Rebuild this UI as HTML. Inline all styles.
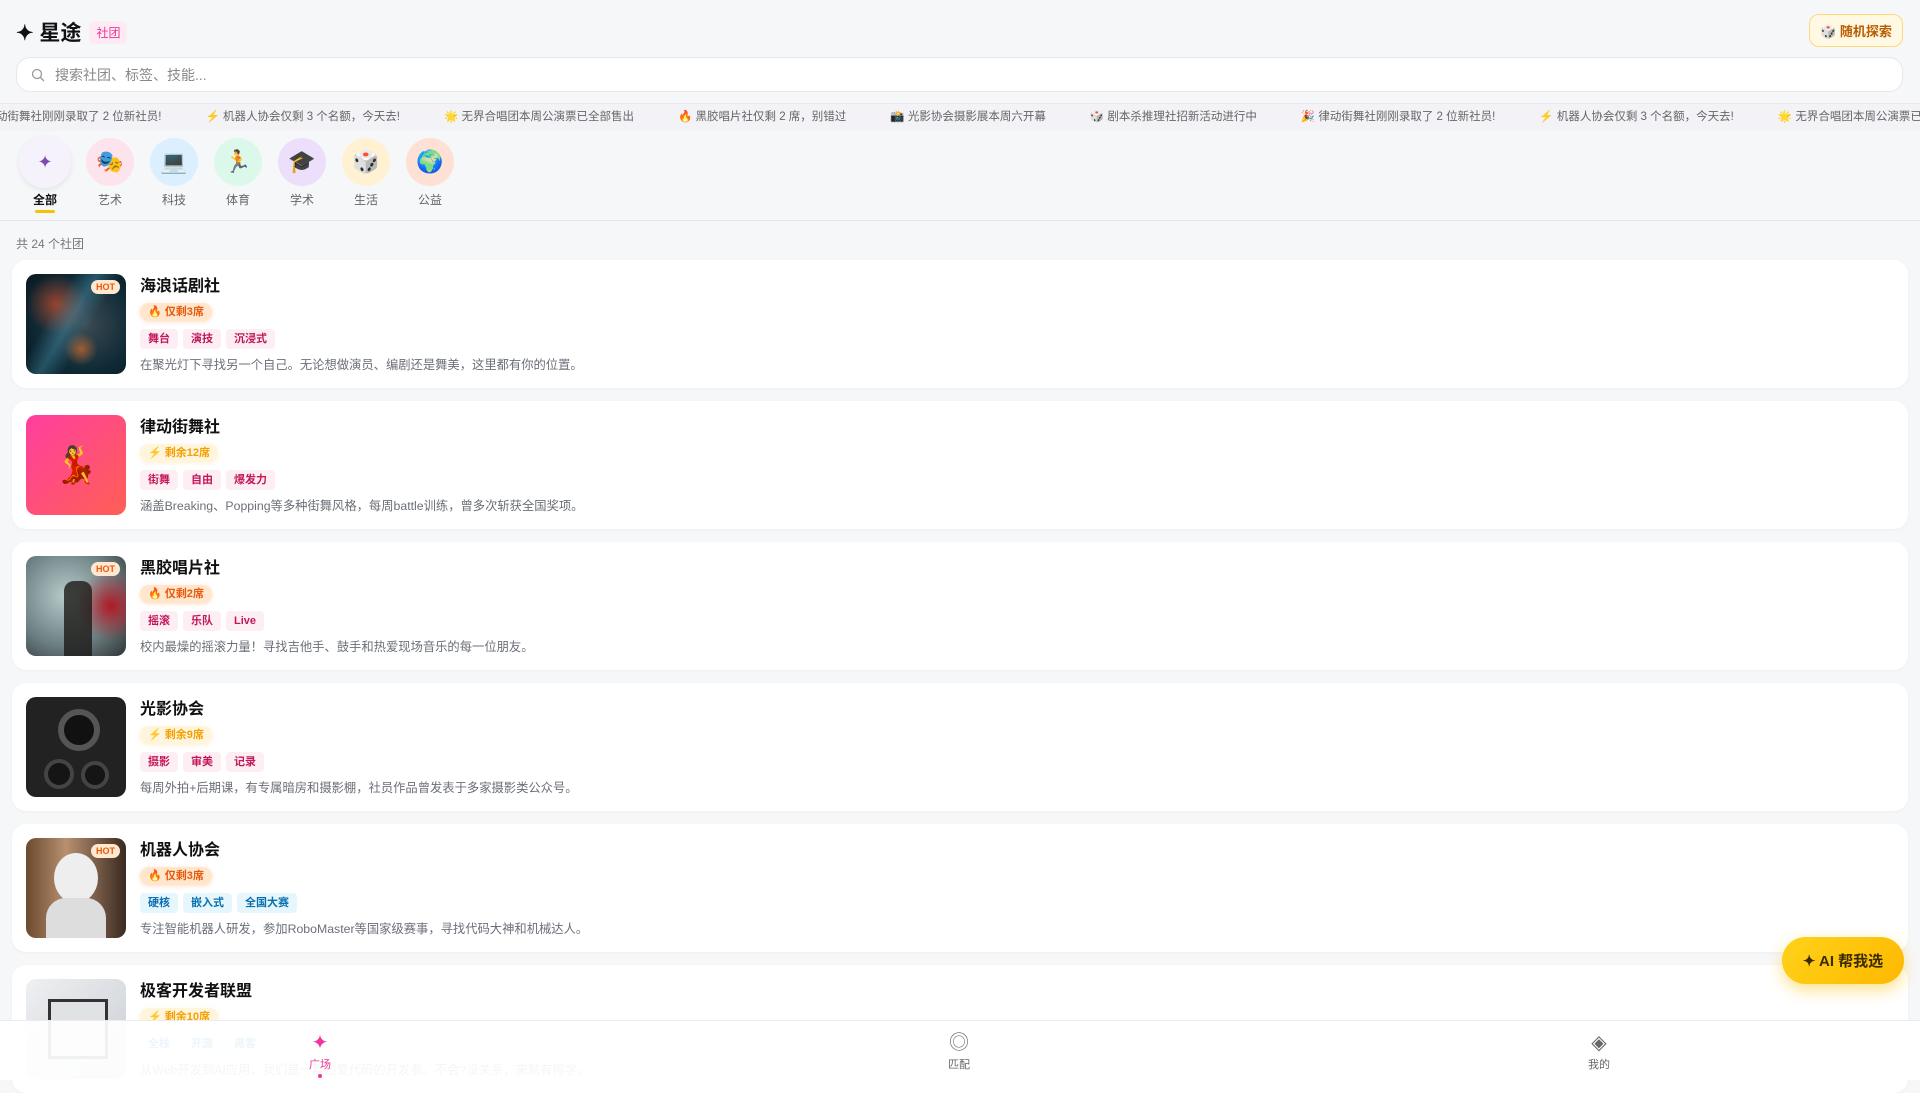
<!DOCTYPE html>
<html><head><meta charset="utf-8"><style>
*{margin:0;padding:0;box-sizing:border-box}
body{width:1920px;height:1080px;overflow:hidden;background:#f6f7f9;font-family:"Liberation Sans","Noto Sans CJK SC",sans-serif;color:#111;position:relative}
.abs{position:absolute}
.logo{left:16px;top:17px;font-size:21px;font-weight:bold;display:flex;align-items:center;gap:8px}
.logo .b{font-size:12px;color:#f0359a;background:#fdeaf3;padding:3px 7px;border-radius:6px;font-weight:normal}
.rand{left:1809px;top:14px;width:94px;height:33px;border:1px solid #fcd97a;background:#fff8e3;border-radius:10px;color:#b85c00;font-size:13px;font-weight:bold;display:flex;align-items:center;justify-content:center}
.search{left:16px;top:57px;width:1887px;height:35px;background:#fff;border:1px solid #e6e7ec;border-radius:14px;display:flex;align-items:center;padding-left:14px;color:#888;font-size:14px}
.ticker{left:0;top:103px;width:1920px;height:28px;background:#f3f2f7;border-top:1px solid #e8e8ee;font-size:11.5px;color:#666;white-space:nowrap;line-height:27px;overflow:hidden}
.ticker span{margin-right:44px}
.cat{top:138px;width:48px;text-align:center}
.cat .c{width:48px;height:48px;border-radius:50%;display:flex;align-items:center;justify-content:center;font-size:22px}
.cat .l{font-size:12px;color:#666;margin-top:5px;white-space:nowrap;margin-left:-10px;width:68px}
.div{left:0;top:220px;width:1920px;height:1px;background:#e6e7ec}
.count{left:16px;top:235px;font-size:12px;color:#777}
.card{left:12px;width:1896px;height:128px;background:#fff;border-radius:14px;box-shadow:0 1px 3px rgba(0,0,0,.04)}
.img{position:absolute;left:14px;top:14px;width:100px;height:100px;border-radius:10px;overflow:hidden;display:flex;align-items:center;justify-content:center;font-size:36px}
.hot{position:absolute;right:6px;top:6px;background:#ffe8cf;color:#e8590c;font-size:9px;font-weight:bold;padding:2px 5px;border-radius:8px}
.t{position:absolute;left:128px;top:12px;font-size:16px;font-weight:bold}
.bd{position:absolute;left:128px;top:43px;height:18px;border-radius:9px;font-size:11px;padding:0 8px;line-height:18px;font-weight:bold}
.b1{background:#ffe6cc;color:#e8590c;box-shadow:0 1px 4px rgba(255,150,60,.3)}
.b2{background:#fff4dc;color:#f59f00;box-shadow:0 1px 4px rgba(255,200,60,.25)}
.tags{position:absolute;left:128px;top:69px;display:flex;gap:5px}
.tags span{font-size:11px;font-weight:bold;padding:0 8px;height:20px;line-height:20px;border-radius:4px;background:#fdeef3;color:#c2185b}
.tags.bl span{background:#e6f6fd;color:#0a6fb0}
.d{position:absolute;left:128px;top:95px;font-size:12.3px;color:#6b6f78}
.nav{left:0;top:1020px;width:1920px;height:60px;background:rgba(255,255,255,.93);border-top:1px solid #ececf0}
.ni{top:10px;width:80px;margin-left:-40px;text-align:center;font-size:11px;color:#666}
.ni .i{font-size:20px;height:25px;line-height:25px}
.ai{left:1782px;top:937px;width:122px;height:47px;border-radius:24px;background:linear-gradient(135deg,#ffd21a,#ffb800);color:#3a2a00;font-weight:bold;font-size:15px;display:flex;align-items:center;justify-content:center;box-shadow:0 6px 16px rgba(255,190,0,.45)}
</style></head><body>
<div class="abs logo">✦ 星途 <span class="b">社团</span></div>
<div class="abs rand">🎲 随机探索</div>
<div class="abs search"><svg width="14" height="14" viewBox="0 0 14 14" style="margin-right:10px"><circle cx="6" cy="6" r="4.5" fill="none" stroke="#999" stroke-width="1.3"/><path d="M9.5 9.5L13 13" stroke="#999" stroke-width="1.3"/></svg>搜索社团、标签、技能...</div>
<div class="abs ticker"><span style="margin-left:-4px">动街舞社刚刚录取了 2 位新社员!</span><span>⚡ 机器人协会仅剩 3 个名额，今天去!</span><span>🌟 无界合唱团本周公演票已全部售出</span><span>🔥 黑胶唱片社仅剩 2 席，别错过</span><span>📸 光影协会摄影展本周六开幕</span><span>🎲 剧本杀推理社招新活动进行中</span><span>🎉 律动街舞社刚刚录取了 2 位新社员!</span><span>⚡ 机器人协会仅剩 3 个名额，今天去!</span><span>🌟 无界合唱团本周公演票已全部售出</span></div>
<div class="abs cat" style="left:21px;top:136px"><div class="c" style="width:52px;height:52px;margin-left:-2px;background:#f6f2fb;box-shadow:0 2px 6px rgba(0,0,0,.08);color:#7b4bb0;font-size:18px">✦</div><div class="l" style="color:#111;font-weight:bold;margin-top:3px">全部</div><div style="width:20px;height:3px;background:#f5c400;margin:2px auto 0;border-radius:2px"></div></div>
<div class="abs cat" style="left:86px"><div class="c" style="background:#fde3ec">🎭</div><div class="l">艺术</div></div>
<div class="abs cat" style="left:150px"><div class="c" style="background:#dcefff">💻</div><div class="l">科技</div></div>
<div class="abs cat" style="left:214px"><div class="c" style="background:#dcf8ea">🏃</div><div class="l">体育</div></div>
<div class="abs cat" style="left:278px"><div class="c" style="background:#ebdffc">🎓</div><div class="l">学术</div></div>
<div class="abs cat" style="left:342px"><div class="c" style="background:#fff1d2">🎲</div><div class="l">生活</div></div>
<div class="abs cat" style="left:406px"><div class="c" style="background:#ffe0d4">🌍</div><div class="l">公益</div></div>
<div class="abs div"></div>
<div class="abs count">共 24 个社团</div>

<div class="abs card" style="top:260px"><div class="img" style="background:radial-gradient(circle at 60% 50%,#3b4a52,#0f2a36 60%,#0a1820)"><div style="position:absolute;left:0;top:0;width:100%;height:100%;background:linear-gradient(120deg,transparent 30%,rgba(80,170,200,.35) 45%,transparent 60%),radial-gradient(circle at 30% 30%,rgba(230,80,40,.6),transparent 30%),radial-gradient(circle at 55% 75%,rgba(210,110,50,.7),transparent 18%)"></div><span class="hot">HOT</span></div><div class="t">海浪话剧社</div><div class="bd b1">🔥 仅剩3席</div><div class="tags"><span>舞台</span><span>演技</span><span>沉浸式</span></div><div class="d">在聚光灯下寻找另一个自己。无论想做演员、编剧还是舞美，这里都有你的位置。</div></div>

<div class="abs card" style="top:401px"><div class="img" style="background:linear-gradient(135deg,#ff3fa0,#ff5f55)">💃</div><div class="t">律动街舞社</div><div class="bd b2">⚡ 剩余12席</div><div class="tags"><span>街舞</span><span>自由</span><span>爆发力</span></div><div class="d">涵盖Breaking、Popping等多种街舞风格，每周battle训练，曾多次斩获全国奖项。</div></div>

<div class="abs card" style="top:542px"><div class="img" style="background:radial-gradient(circle at 85% 50%,#b01a25,transparent 35%),radial-gradient(circle at 40% 40%,#b9cccc,#6a7d80 60%,#2d3336)"><div style="position:absolute;left:38px;top:25px;width:28px;height:75px;background:#1d1a18;border-radius:10px 10px 0 0;opacity:.8"></div><span class="hot">HOT</span></div><div class="t">黑胶唱片社</div><div class="bd b1">🔥 仅剩2席</div><div class="tags"><span>摇滚</span><span>乐队</span><span>Live</span></div><div class="d">校内最燥的摇滚力量！寻找吉他手、鼓手和热爱现场音乐的每一位朋友。</div></div>

<div class="abs card" style="top:683px"><div class="img" style="background:#222"><div style="position:absolute;left:32px;top:12px;width:42px;height:42px;border-radius:50%;border:6px solid #555;background:#111"></div><div style="position:absolute;left:18px;top:62px;width:30px;height:30px;border-radius:50%;border:4px solid #444;background:#151515"></div><div style="position:absolute;left:55px;top:64px;width:28px;height:28px;border-radius:50%;border:4px solid #444;background:#151515"></div></div><div class="t">光影协会</div><div class="bd b2">⚡ 剩余9席</div><div class="tags"><span>摄影</span><span>审美</span><span>记录</span></div><div class="d">每周外拍+后期课，有专属暗房和摄影棚，社员作品曾发表于多家摄影类公众号。</div></div>

<div class="abs card" style="top:824px"><div class="img" style="background:linear-gradient(90deg,#6b4a2e,#b89070 40%,#3a2a20)"><div style="position:absolute;left:28px;top:15px;width:44px;height:50px;border-radius:50%;background:#eee"></div><div style="position:absolute;left:20px;top:60px;width:60px;height:45px;border-radius:20px 20px 0 0;background:#ddd"></div><span class="hot">HOT</span></div><div class="t">机器人协会</div><div class="bd b1">🔥 仅剩3席</div><div class="tags bl"><span>硬核</span><span>嵌入式</span><span>全国大赛</span></div><div class="d">专注智能机器人研发，参加RoboMaster等国家级赛事，寻找代码大神和机械达人。</div></div>

<div class="abs card" style="top:965px"><div class="img" style="background:linear-gradient(135deg,#eef0f2,#c9ced3)"><div style="position:absolute;left:22px;top:20px;width:60px;height:60px;border:3px solid #333;background:#dfe3e6"></div></div><div class="t">极客开发者联盟</div><div class="bd b2">⚡ 剩余10席</div><div class="tags bl"><span>全栈</span><span>开源</span><span>黑客</span></div><div class="d">从Web开发到AI应用，我们是一群热爱代码的开发者。不会?没关系，来就有得学。</div></div>

<div class="abs ai">✦ AI 帮我选</div>
<div class="abs nav">
<div class="abs ni" style="left:320px;color:#f0359a"><div class="i">✦</div>广场<div style="width:4px;height:4px;border-radius:50%;background:#f0359a;margin:2px auto 0"></div></div>
<div class="abs ni" style="left:959px"><div class="i" style="color:#777">◎</div>匹配</div>
<div class="abs ni" style="left:1599px"><div class="i" style="color:#666">◈</div>我的</div>
</div>
</body></html>
